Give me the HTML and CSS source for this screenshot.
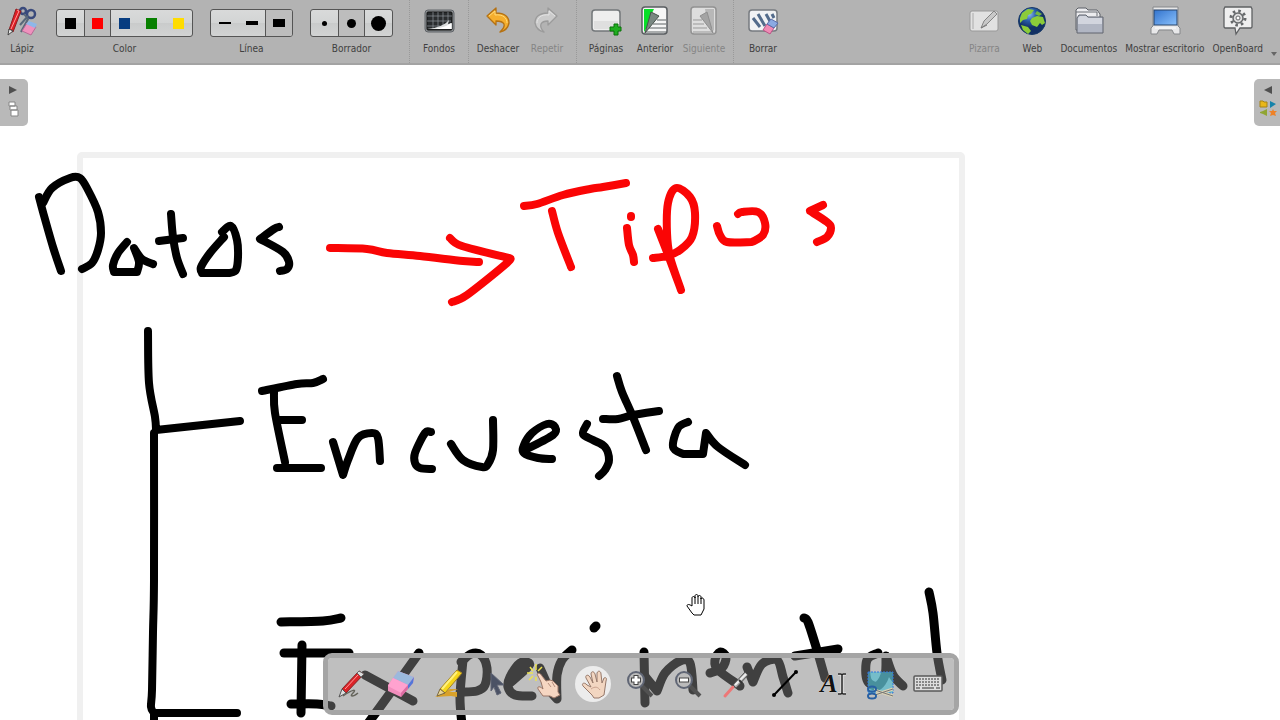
FILE: index.html
```html
<!DOCTYPE html>
<html lang="es">

<head>
    <meta charset="UTF-8">
    <meta name="viewport" content="width=device-width, initial-scale=1.0">
    <title>OpenBoard</title>
    <link rel="stylesheet" href="styles.css">
</head>

<body>
    <header class="toolbar">
        <button class="tool">
            <svg class="icon" viewBox="0 0 32 32">
                <circle cx="25" cy="8" r="4" fill="none" stroke="#3a4a7c" stroke-width="2.5"/>
                <circle cx="17" cy="5" r="3" fill="none" stroke="#3a4a7c" stroke-width="2.5"/>
                <path d="M18 8l4 5-7 13M22 10l-8 9" stroke="#59677a" stroke-width="2" fill="none"/>
                <path d="M10 3l5 2-8 21-4-2z" fill="#df1d24" stroke="#8c2023"/>
                <path d="M11 4l2 1-8 18" stroke="#ff9b9b" fill="none"/>
                <path d="M3 23l4 2-5 4z" fill="#eee" stroke="#444"/>
                <path d="M21 17l9 4-5 8-9-4z" fill="#ef91bd" stroke="#b66c96"/>
                <path d="M23 15l8 3-2 4-9-4z" fill="#8db7e9"/>
            </svg>
            <span>Lápiz</span>
        </button>
        <div class="group">
            <div class="choices" role="group" aria-labelledby="color">
                <button aria-label="Negro"><i class="swatch black"></i></button>
                <button class="active" aria-label="Rojo"><i class="swatch red"></i></button>
                <button aria-label="Azul"><i class="swatch blue"></i></button>
                <button aria-label="Verde"><i class="swatch green"></i></button>
                <button aria-label="Amarillo"><i class="swatch yellow"></i></button>
            </div>
            <span id="color">Color</span>
        </div>
        <div class="group">
            <div class="choices" role="group" aria-labelledby="line">
                <button aria-label="Fina"><i class="line thin"></i></button>
                <button aria-label="Media"><i class="line medium"></i></button>
                <button class="active" aria-label="Gruesa"><i class="line thick"></i></button>
            </div>
            <span id="line">Línea</span>
        </div>
        <div class="group">
            <div class="choices" role="group" aria-labelledby="eraser">
                <button aria-label="Pequeño"><i class="dot small"></i></button>
                <button class="active" aria-label="Mediano"><i class="dot mid"></i></button>
                <button aria-label="Grande"><i class="dot big"></i></button>
            </div>
            <span id="eraser">Borrador</span>
        </div>
        <div class="section first">
            <button class="tool">
                <svg class="icon" viewBox="0 0 32 32">
                    <rect x="2" y="4" width="29" height="22" rx="3" fill="#8e9295" stroke="#606468"/>
                    <rect x="4" y="6" width="25" height="18" rx="1" fill="#292c2e" stroke="#111"/>
                    <path d="M10 6v17M15 6v17M20 6v14M25 6v10M4 10h25M4 15h24M4 20h13" stroke="#91979b" stroke-width=".7"/>
                    <path d="M4 23C14 22 22 19 26 14l-1 4 4-1v6z" fill="#d9dcdd"/>
                    <path d="M6 23c8 0 17-2 22-6v6z" fill="#fff"/>
                </svg>
                <span>Fondos</span>
            </button>
        </div>
        <div class="section">
            <button class="tool">
                <svg class="icon" viewBox="0 0 32 32">
                    <path d="M5 10l9-8v5c9 0 13 4 13 10-1 5-4 8-9 9 3-3 5-5 4-8-1-2-3-3-8-3v4z" fill="#f5ae2d" stroke="#b47113" stroke-width="1.3" stroke-linejoin="round"/>
                    <path d="M7 10l6-5v4c8-1 12 3 12 8" fill="none" stroke="#ffda79"/>
                </svg>
                <span>Deshacer</span>
            </button>
            <button class="tool disabled" disabled>
                <svg class="icon" viewBox="0 0 32 32">
                    <path d="M26 10l-9-8v5C8 7 4 11 4 17c1 5 4 8 9 9-3-3-4-5-3-8 1-2 3-3 7-3v4z" fill="#cbcbcb" stroke="#9b9b9b" stroke-width="1.3" stroke-linejoin="round"/>
                    <path d="M24 10l-6-5v4C10 8 6 12 6 17" fill="none" stroke="#e3e3e3"/>
                </svg>
                <span>Repetir</span>
            </button>
        </div>
        <div class="section">
            <button class="tool">
                <svg class="icon" viewBox="0 0 32 32">
                    <rect x="2" y="4" width="28" height="21" rx="3" fill="#eee" stroke="#73777a" stroke-width="1.5"/>
                    <path d="M4 15h24v8H4z" fill="#dfdfdf"/>
                    <path d="M24 18h4v3h3v4h-3v4h-4v-4h-4v-4h4z" fill="#20ad20" stroke="#087208"/>
                </svg>
                <span>Páginas</span>
            </button>
            <button class="tool">
                <svg class="icon" viewBox="0 0 32 32">
                    <rect x="3" y="1" width="25" height="27" rx="3" fill="#f6f6f6" stroke="#5a5e61" stroke-width="1.5"/>
                    <path d="M18 14h9M14 18h13M10 22h17M7 26h20" stroke="#5d6265"/>
                    <path d="M5 3h10l-2 4 3 2L5 26z" fill="#08df28"/>
                    <path d="M12 6l8 4L6 27z" fill="#798781" stroke="#48524c"/>
                </svg>
                <span>Anterior</span>
            </button>
            <button class="tool disabled" disabled>
                <svg class="icon" viewBox="0 0 32 32">
                    <rect x="3" y="1" width="25" height="27" rx="3" fill="#dedede" stroke="#929292" stroke-width="1.5"/>
                    <path d="M5 14h9M5 18h11M5 22h14M5 26h20" stroke="#999"/>
                    <path d="M17 3h9v22L14 9h4z" fill="#b8b8b8"/>
                    <path d="M19 6l-7 4 13 17z" fill="#a4a4a4" stroke="#8f8f8f"/>
                </svg>
                <span>Siguiente</span>
            </button>
        </div>
        <div class="section">
            <button class="tool">
                <svg class="icon" viewBox="0 0 32 32">
                    <rect x="2" y="4" width="28" height="21" rx="3" fill="#f1f2f4" stroke="#777b80" stroke-width="1.5"/>
                    <path d="M6 12l7 9M11 8l7 12M19 8l5 9M25 8l2 4" stroke="#536b8b" stroke-width="3"/>
                    <path d="M20 18l7 4-4 6-7-4z" fill="#f08bb5" stroke="#b95586"/>
                    <path d="M24 13l7 4-4 5-7-4z" fill="#8baae3" stroke="#5b6da8"/>
                </svg>
                <span>Borrar</span>
            </button>
        </div>
        <nav class="modes">
            <button class="tool disabled" disabled>
                <svg class="icon" viewBox="0 0 32 32">
                    <rect x="2" y="5" width="28" height="20" rx="2" fill="#e1e1e1" stroke="#999"/>
                    <path d="M5 7v16" stroke="#aaa"/>
                    <path d="M13 22l3-7L26 5l3 3-10 10z" fill="#c8c8c8" stroke="#858585"/>
                    <path d="M13 22l6-3" stroke="#777"/>
                </svg>
                <span>Pizarra</span>
            </button>
            <button class="tool">
                <svg class="icon" viewBox="0 0 32 32">
                    <defs>
                        <radialGradient id="globe" cx=".4" cy=".25"><stop stop-color="#8ebcf0"/><stop offset=".5" stop-color="#285da8"/><stop offset="1" stop-color="#123064"/></radialGradient>
                    </defs>
                    <circle cx="16" cy="15" r="13.5" fill="url(#globe)" stroke="#173967"/>
                    <path d="M6 7l6-4 6 1-3 4-3 1-1 4-4 1-3 3V12zM16 12l5-2 6 1 2 6-3 2-2-2-3 4-5-2-2-4zM5 19l7 2 3 4-3 3-5-4z" fill="#8bcb39"/>
                    <path d="M21 5l5 3-3 2-4-2z" fill="#72b741"/>
                </svg>
                <span>Web</span>
            </button>
            <button class="tool">
                <svg class="icon" viewBox="0 0 32 32">
                    <path d="M3 24V4l2-2h8l2 2h9l3 4v16z" fill="#ececef" stroke="#5b5f66"/>
                    <path d="M3 6h21v4" stroke="#6a6e75" fill="none"/>
                    <path d="M4 27V12l2-3h7l2 2h15v16z" fill="#b1b6c3" stroke="#60656f"/>
                    <path d="M5 12l2-2h6l2 2h14v6H5z" fill="#d2d5de"/>
                </svg>
                <span>Documentos</span>
            </button>
            <button class="tool">
                <svg class="icon" viewBox="0 0 32 32">
                    <defs>
                        <linearGradient id="screen" x2="1" y2="1"><stop stop-color="#3273cd"/><stop offset="1" stop-color="#8ac1fc"/></linearGradient>
                    </defs>
                    <path d="M4 1h25v19l2 2v6h-6l-2-4H10l-2 4H2v-6l2-2z" fill="#e8e8e9" stroke="#85878a"/>
                    <rect x="5" y="4" width="23" height="15" fill="url(#screen)" stroke="#274369"/>
                    <path d="M6 22h21" stroke="#fff"/>
                </svg>
                <span>Mostrar escritorio</span>
            </button>
            <button class="tool">
                <svg class="icon" viewBox="0 0 32 32">
                    <path d="M3 1h26l1 2v18l-1 1H18l-4 6-1-6H3L2 21V3z" fill="#efefef" stroke="#5f6163" stroke-width="1.3"/>
                    <circle cx="16" cy="12" r="7" fill="none" stroke="#66696b" stroke-width="3" stroke-dasharray="2.5 3"/>
                    <circle cx="16" cy="12" r="5" fill="#ddd" stroke="#66696b" stroke-width="1.5"/>
                    <circle cx="16" cy="12" r="2" fill="#fff" stroke="#66696b"/>
                </svg>
                <span>OpenBoard</span>
            </button>
            <i class="more"></i>
        </nav>
    </header>

    <main class="board">
        <svg class="drawing" width="1280" height="655" viewBox="0 65 1280 655" role="img" aria-label="Datos, Tipos, Encuesta, Experimental">
            <rect class="sheet" x="80" y="155" width="882" height="660" rx="2"/>
            <g id="ink"></g>
            <!-- hand cursor -->
            <path d="M692 613l-5-7c0-2 2-2 5 0v-8c0-2 3-2 3 0v-2c0-2 3-2 3 0v1c0-2 3-2 3 0v2c0-2 3-1 3 1v9l-3 6h-7zM695 597v7M698 597v7M701 598v6" fill="#fff" stroke="#000"/>
        </svg>

        <button class="tab left" aria-label="Páginas">
            <svg width="20" height="40" viewBox="0 0 20 40">
                <path d="M3 3l8 4-8 4z" fill="#505050"/>
                <path d="M3 19h6v4H3zM4 23h7v4H4zM5 27h7v6H5z" fill="#fff" stroke="#858585"/>
            </svg>
        </button>
        <button class="tab right" aria-label="Biblioteca">
            <svg width="20" height="40" viewBox="0 0 20 40">
                <path d="M13 3L5 7l8 4z" fill="#505050"/>
                <path d="M1 18h3l1 1h3v5H1z" fill="#e9b719" stroke="#a58319"/>
                <path d="M11 18l6 3-6 4z" fill="#1683aa"/>
                <path d="M1 29l3-1 4-2v7l-4-2-3-1z" fill="#90a532"/>
                <path d="M14 26l1 2h3l-2 2 1 3-3-1-3 1 1-3-2-2h3z" fill="#ee8127"/>
            </svg>
        </button>

        <div class="dock">
            <div class="palette">
                <button aria-label="Lápiz">
                    <svg class="icon" viewBox="0 0 32 32">
                        <path d="M6 28c10-7 14-7 10-3s0 4 5 0" fill="none" stroke="#65645b" stroke-width="1.5"/>
                        <path d="M22 3l5 3L9 25l-4-4z" fill="#dc2227" stroke="#842326"/>
                        <path d="M22 3l5 3-3 3-4-4z" fill="#ddd" stroke="#666"/>
                        <path d="M21 7L8 21" stroke="#ff9b9b"/>
                        <path d="M5 21l4 4-7 4z" fill="#ddd" stroke="#555"/>
                    </svg>
                </button>
                <button aria-label="Borrador">
                    <svg class="icon" viewBox="0 0 32 32">
                        <path d="M13 3l16 6-1 6-12 14-13-6v-6z" fill="#f18dbc"/>
                        <path d="M13 3l16 6-6 8-15-7z" fill="#9bb9dc"/>
                        <path d="M8 10l15 7-7 8-13-7z" fill="#ffa2cf"/>
                        <path d="M29 9l-1 6-5 6v-4z" fill="#5278d9"/>
                        <path d="M23 17v4l-7 8v-4z" fill="#dc6ca2"/>
                    </svg>
                </button>
                <button aria-label="Marcador">
                    <svg class="icon" viewBox="0 0 32 32">
                        <path d="M2 29l15-8h8l-9 3h8v5l-6-1z" fill="#d8a12a"/>
                        <path d="M24 2l5 3L12 25l-5-4z" fill="#f5d51b" stroke="#a58322"/>
                        <path d="M24 4L9 21" stroke="#fff17b" stroke-width="2"/>
                        <path d="M7 21l5 4-8 3z" fill="#e8d494" stroke="#7b6840"/>
                    </svg>
                </button>
                <button aria-label="Seleccionar">
                    <svg class="icon" viewBox="0 0 32 32">
                        <path d="M10 5l13 12h-7l4 8-4 2-3-8-3 4z" fill="#4b5265" stroke="#606575"/>
                    </svg>
                </button>
                <button aria-label="Interactuar">
                    <svg class="icon" viewBox="0 0 32 32">
                        <path d="M1-1l3 4M7-4v6M13-1l-4 4M-2 5h6M0 12l4-4M7 9v4" stroke="#eee34f" stroke-width="1.5"/>
                        <path d="M8 6c2-2 4 0 5 2l4 5 4-1 3 1 5 5v6l2 3-6 3-4-2h-7l-5-7c-1-3 2-3 5 0l-2-7z" fill="#f6d6c2" stroke="#9c7768"/>
                        <path d="M19 15l3 4M23 14l3 5" stroke="#b68e7d"/>
                    </svg>
                </button>
                <button class="selected" aria-label="Desplazar">
                    <svg class="icon" viewBox="0 0 32 32">
                        <path d="M15 27L6 18c-2-3 2-4 4-1l4 2-5-9c-1-3 2-4 4-1l3 6-2-9c0-3 3-3 4 0l2 8V5c1-3 4-2 4 1l1 9 2-5c2-1 3 0 2 3l-2 14-5 3h-5z" fill="#f2d6c1" stroke="#97796a"/>
                        <path d="M14 21c4-3 7-2 9 1" fill="none" stroke="#c9a18e"/>
                    </svg>
                </button>
                <button aria-label="Acercar">
                    <svg class="icon" viewBox="0 0 32 32">
                        <path d="M17 18l10 10" stroke="#515151" stroke-width="4"/>
                        <circle cx="11" cy="12" r="8" fill="#bbb" stroke="#606675" stroke-width="2"/>
                        <path d="M6 12h10M11 7v10" stroke="#444" stroke-width="5"/><path d="M7 12h8M11 8v8" stroke="#fff" stroke-width="3"/>
                    </svg>
                </button>
                <button aria-label="Alejar">
                    <svg class="icon" viewBox="0 0 32 32">
                        <path d="M17 18l10 10" stroke="#515151" stroke-width="4"/>
                        <circle cx="11" cy="12" r="8" fill="#bbb" stroke="#606675" stroke-width="2"/>
                        <path d="M6 12h10" stroke="#444" stroke-width="5"/><path d="M7 12h8" stroke="#fff" stroke-width="3"/>
                    </svg>
                </button>
                <button aria-label="Puntero láser">
                    <svg class="icon" viewBox="0 0 32 32">
                        <path d="M4 28l8-9" stroke="#ed7777" stroke-width="3" stroke-linecap="round"/>
                        <path d="M12 17L24 4l3 3-12 13z" fill="#aaa" stroke="#555"/>
                        <path d="M14 17L25 6" stroke="#eee" stroke-width="2"/>
                        <path d="M18 12l3 3" stroke="#333" stroke-width="2"/>
                    </svg>
                </button>
                <button aria-label="Línea">
                    <svg class="icon" viewBox="0 0 32 32">
                        <path d="M5 27L27 4" stroke="#000" stroke-width="2"/><circle cx="5" cy="27" r="2" fill="#000"/><circle cx="27" cy="4" r="2" fill="#000"/>
                    </svg>
                </button>
                <button class="text-tool" aria-label="Texto">
                    <em>A</em>
                    <svg width="8" height="22" viewBox="0 0 8 22"><path d="M0 1h3l1 1 1-1h3M4 1v20M0 21h3l1-1 1 1h3" fill="none" stroke="#eee" stroke-width="3"/><path d="M0 1h3l1 1 1-1h3M4 1v20M0 21h3l1-1 1 1h3" fill="none" stroke="#222" stroke-width="1.5"/></svg>
                </button>
                <button aria-label="Capturar">
                    <svg class="icon" viewBox="0 0 32 32">
                        <rect x="3" y="4" width="25" height="21" fill="#4dbbd0" fill-opacity=".65" stroke="#3176df" stroke-dasharray="2 1"/>
                        <path d="M9 22l19 6M9 27l19-6" stroke="#d9d1b5" stroke-width="3"/>
                        <path d="M10 22l18 6M10 27l18-6" stroke="#777"/>
                        <ellipse cx="7" cy="21" rx="4" ry="2.5" fill="none" stroke="#2860a3" stroke-width="2"/><ellipse cx="7" cy="28" rx="4" ry="2.5" fill="none" stroke="#2860a3" stroke-width="2"/>
                    </svg>
                </button>
                <button aria-label="Teclado">
                    <svg class="icon" viewBox="0 0 32 32">
                        <rect x="1" y="8" width="28" height="15" rx="1" fill="#ddd" stroke="#5a5a5a" stroke-width="1.5"/>
                        <path d="M3 11h24M3 14h24M3 17h24" stroke="#888" stroke-width="2" stroke-dasharray="2 1"/>
                        <path d="M3 20h4m2 0h12m2 0h4" stroke="#888" stroke-width="2"/>
                    </svg>
                </button>
            </div>
        </div>
    </main>

    <script src="script.js"></script>
</body>

</html>
```
FILE: styles.css
```css
* {
    margin: 0;
    padding: 0;
    box-sizing: border-box;
}

body {
    min-height: 100vh;
    display: flex;
    flex-direction: column;
    overflow: hidden;
    background: #fff;
    color: #404040;
    font-family: "DejaVu Sans Condensed", "Noto Sans", sans-serif;
    font-size: 10px;
    line-height: 14px;
}

button {
    border: 0;
    background: none;
    color: inherit;
    font: inherit;
    cursor: pointer;
}

.toolbar {
    display: flex;
    height: 65px;
    background: #b3b3b3;
    border-bottom: 2px solid #a3a3a3;
    white-space: nowrap;
}

.tool {
    display: flex;
    flex-direction: column;
    align-items: center;
    gap: 4px;
    min-width: 44px;
    padding-top: 6px;
}

.icon {
    display: block;
    width: 32px;
    height: 32px;
    overflow: visible;
}

.disabled {
    color: #858585;
}

.group {
    display: flex;
    flex-direction: column;
    align-items: center;
    gap: 5px;
    margin-left: 17px;
    padding-top: 9px;
}

.tool + .group {
    margin-left: 12px;
}

.choices {
    display: flex;
    height: 28px;
    border: 1px solid #555;
    border-radius: 3px;
    overflow: hidden;
    background: linear-gradient(#d9dada, #d2d4d4 50%, #c9cbcb 50%, #d2d3d3);
}

.choices button {
    display: grid;
    place-items: center;
    width: 27px;
}

.choices .active {
    background: #bdbdbd;
    border: solid #555;
    border-width: 0 1px;
}

.choices .active:last-child {
    border-right: 0;
}

.swatch {
    width: 11px;
    height: 11px;
}

.black { background: #000; }
.red { background: #f00; }
.blue { background: #063c80; }
.green { background: #078000; }
.yellow { background: #ffdc00; }

.line {
    width: 12px;
    background: #000;
}

.thin { height: 2px; }
.medium { height: 4px; }
.thick { height: 8px; }

.dot {
    border-radius: 50%;
    background: #000;
}

.small { width: 5px; height: 5px; }
.mid { width: 9px; height: 9px; }
.big { width: 15px; height: 15px; }

.section {
    display: flex;
    gap: 5px;
    padding: 0 7px;
    border-left: 1px dotted #999;
}

.section.first {
    margin-left: 16px;
}

.modes {
    display: flex;
    gap: 8px;
    margin-left: auto;
    padding-right: 3px;
}

.modes .tool {
    min-width: 40px;
}

.more {
    align-self: flex-end;
    margin-bottom: 7px;
    border: 3px solid transparent;
    border-top: 4px solid #666;
    border-bottom: 0;
}

.board {
    position: relative;
    flex: 1;
    overflow: hidden;
}

.drawing {
    display: block;
}

.sheet {
    fill: none;
    stroke: #f0f0f0;
    stroke-width: 6px;
}

#ink path {
    fill: none;
    stroke: #000;
    stroke-width: 8px;
    stroke-linecap: round;
    stroke-linejoin: round;
}

#ink .red-ink {
    stroke: #fa0505;
}

#ink .wide-ink {
    stroke-width: 9px;
}

.tab {
    position: absolute;
    top: 14px;
    height: 47px;
    background: #b9b9b9;
}

.tab svg {
    display: block;
}

.left {
    left: 0;
    padding-left: 6px;
    width: 28px;
    border-radius: 0 5px 5px 0;
}

.right {
    right: 0;
    padding-left: 5px;
    width: 26px;
    border-radius: 5px 0 0 5px;
}

/* floating palette over the bottom of the board */
.dock {
    position: absolute;
    bottom: 5px;
    left: 0;
    right: 0;
    display: flex;
    justify-content: center;
    padding-left: 2px;
}

.palette {
    display: flex;
    gap: 16px;
    padding: 10px 9px;
    border: 5px solid #a5a5a5;
    border-radius: 9px;
    background: rgba(127, 127, 127, 0.5);
    background-clip: padding-box;
}

.palette button {
    width: 32px;
    height: 32px;
}

.palette .selected {
    border-radius: 50%;
    background: #ececec;
    box-shadow: 0 0 0 2px #ececec;
}

.palette .text-tool {
    display: flex;
    align-items: center;
    justify-content: center;
    color: #111;
    font-family: "Liberation Serif", serif;
    font-size: 26px;
    font-weight: bold;
    text-shadow: 0 0 1px #fff;
}
```
FILE: script.js
```javascript
// each stroke is a list of x,y points, a repeated point makes a sharp corner
var black = [
    // Datos
    "39,197 43,212 53,247 61,271",
    "43,203 52,188 70,178 80,178 88,190 98,212 101,233 98,250 92,263 82,269",
    "127,242 118,253 113,265 114,272 114,272 137,272 137,272 139,262 134,248 134,248 142,259 153,264",
    "171,214 173,237 177,258 183,274",
    "159,241 183,238",
    "222,232 231,226 237,240 238,257 236,270 230,273 230,273 202,273 202,273 201,267 210,253 224,237",
    "279,227 274,229 260,239 260,239 283,252 289,262 287,269 280,271",
    // tree
    "148,331 149,383 155,417 156,430 156,430 240,421",
    "154,433 154,433 154,580 153,632 152,690 151,707 154,713 154,713 237,713",
    "154,713 154,725",
    // Encuesta
    "262,391 297,384 313,383 323,379",
    "274,392 275,413 285,462",
    "278,420 302,420",
    "277,468 321,468",
    "333,442 343,475 343,475 348,460 358,438 372,433 378,438 380,461",
    "431,432 425,433 415,453 415,463 420,468 432,469",
    "451,444 463,460 482,467 488,464 493,450 493,420",
    "527,449 553,435 555,427 547,424 532,433 524,445 524,453 538,458 552,459",
    "587,424 583,434 593,440 605,447 609,460 605,470 599,476",
    "617,376 622,392 633,417 646,450",
    "603,419 618,419 633,415 659,411",
    "688,422 678,428 673,447 683,454 683,454 703,454 703,454 706,433 706,433 718,447 745,465"
];

var wide = [
    // Experimental
    "281,622 323,621 341,618",
    "284,653 349,653",
    "302,645 301,713",
    "291,704 317,704 331,706",
    "419,653 380,707 363,730",
    "365,675 413,701",
    "463,660 460,697 462,725",
    "461,662 471,654 481,655 487,668 485,685 477,691 461,692",
    "510,683 527,668 529,663 520,663 510,677 508,687 515,695 532,696",
    "540,668 550,690 557,699 557,699 557,675 562,660 572,650",
    "594,628 596,626",
    "644,652 645,703",
    "644,675 657,691 657,691 665,673 680,661 690,663 693,690",
    "710,673 722,668 726,657 720,652 715,660 718,670 740,686",
    "747,667 753,682 753,682 762,664 777,660 783,677 788,693",
    "804,618 808,622 817,650 825,678",
    "795,656 838,649",
    "878,653 867,660 867,680 877,686 885,675 886,656 886,656 893,675 903,686",
    "929,592 933,613 937,653 942,680"
];

var red = [
    // arrow
    "330,248 367,249 387,253 420,256 463,261 479,262",
    "450,238 462,246 509,258 509,258 507,263 467,295 452,302",
    // Tipos
    "524,206 537,204 563,195 590,189 603,187 626,183",
    "552,211 558,233 571,267",
    "627,228 629,245 633,255 634,262",
    "631,216 631,217",
    "658,229 670,260 681,290 681,290 670,257 667,233 668,203 676,188 690,197 695,213 692,237 680,250 667,256 653,258",
    "738,214 742,212 758,212 765,223 763,235 752,242 752,242 727,242 720,235 717,226",
    "823,205 810,211 810,211 827,222 831,228 827,237 817,242"
];

function toPath(stroke) {
    var p = stroke.split(" ").map(function (s) {
        return s.split(",").map(Number);
    });
    var d = "M" + p[0];
    for (var i = 0; i < p.length - 1; i++) {
        var a = p[i - 1] || p[i];
        var b = p[i];
        var c = p[i + 1];
        var e = p[i + 2] || c;
        // the repeated point has no length
        if (b[0] == c[0] && b[1] == c[1]) {
            continue;
        }
        d += "C" + (b[0] + (c[0] - a[0]) / 6) + "," + (b[1] + (c[1] - a[1]) / 6)
            + " " + (c[0] - (e[0] - b[0]) / 6) + "," + (c[1] - (e[1] - b[1]) / 6)
            + " " + c;
    }
    return d;
}

function draw(strokes, name) {
    for (var i = 0; i < strokes.length; i++) {
        var path = document.createElementNS("http://www.w3.org/2000/svg", "path");
        path.setAttribute("d", toPath(strokes[i]));
        path.setAttribute("class", name);
        document.getElementById("ink").appendChild(path);
    }
}

draw(black, "black-ink");
draw(wide, "wide-ink");
draw(red, "red-ink");
```
